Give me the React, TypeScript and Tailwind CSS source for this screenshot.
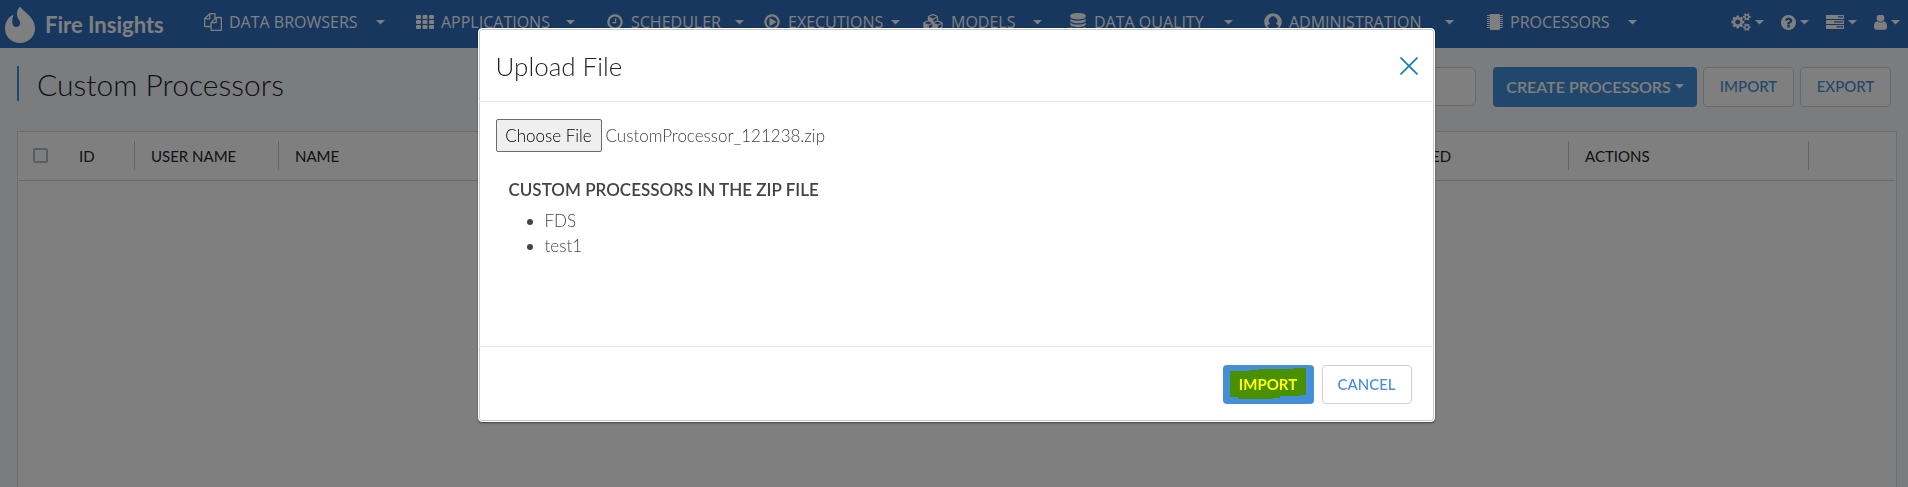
import { useEffect, useRef } from "react";
import type { ReactNode } from "react";

const PATHS = {
  files:
    "M1696 384q40 0 68 28t28 68v1216q0 40-28 68t-68 28h-960q-40 0-68-28t-28-68v-288h-544q-40 0-68-28t-28-68v-672q0-40 20-88t48-76l408-408q28-28 76-48t88-20h416q40 0 68 28t28 68v328q68-40 128-40h416zm-544 213l-299 299h299v-299zm-640-384l-299 299h299v-299zm196 647l316-316v-416h-384v416q0 40-28 68t-68 28h-416v640h512v-256q0-40 20-88t48-76zm956 804v-1152h-384v416q0 40-28 68t-68 28h-416v640h896z",
  clock:
    "M1024 544v448q0 14-9 23t-23 9h-320q-14 0-23-9t-9-23v-64q0-14 9-23t23-9h224v-352q0-14 9-23t23-9h64q14 0 23 9t9 23zm416 352q0-148-73-273t-198-198-273-73-273 73-198 198-73 273 73 273 198 198 273 73 273-73 198-198 73-273zm224 0q0 209-103 385.5t-279.5 279.5-385.5 103-385.5-103-279.5-279.5-103-385.5 103-385.5 279.5-279.5 385.5-103 385.5 103 279.5 279.5 103 385.5z",
  play: "M1312 896q0 37-32 55l-544 320q-15 9-32 9-16 0-32-8-32-19-32-56v-640q0-37 32-56 33-18 64 1l544 320q32 18 32 55zm128 0q0-148-73-273t-198-198-273-73-273 73-198 198-73 273 73 273 198 198 273 73 273-73 198-198 73-273zm224 0q0 209-103 385.5t-279.5 279.5-385.5 103-385.5-103-279.5-279.5-103-385.5 103-385.5 279.5-279.5 385.5-103 385.5 103 279.5 279.5 103 385.5z",
  cubes:
    "M640 1632l384-192v-314l-384 164v342zm-64-454l404-173-404-173-404 173zm1088 454l384-192v-314l-384 164v342zm-64-454l404-173-404-173-404 173zm-448-293l384-165v-266l-384 164v267zm-64-379l441-189-441-189-441 189zm1088 518v416q0 36-19 67t-52 47l-448 224q-25 14-57 14t-57-14l-448-224q-4-2-7-4-2 2-7 4l-448 224q-25 14-57 14t-57-14l-448-224q-33-16-52-47t-19-67v-416q0-38 21.5-70t56.5-48l434-186v-400q0-38 21.5-70t56.5-48l448-192q23-10 50-10t50 10l448 192q35 16 56.5 48t21.5 70v400l434 186q36 16 57 48t21 70z",
  database:
    "M896 768q237 0 443-43t325-127v170q0 69-103 128t-280 93.5-385 34.5-385-34.5-280-93.5-103-128v-170q119 84 325 127t443 43zm0 768q237 0 443-43t325-127v170q0 69-103 128t-280 93.5-385 34.5-385-34.5-280-93.5-103-128v-170q119 84 325 127t443 43zm0-384q237 0 443-43t325-127v170q0 69-103 128t-280 93.5-385 34.5-385-34.5-280-93.5-103-128v-170q119 84 325 127t443 43zm0-1152q208 0 385 34.5t280 93.5 103 128v128q0 69-103 128t-280 93.5-385 34.5-385-34.5-280-93.5-103-128v-128q0-69 103-128t280-93.5 385-34.5z",
  user: "M1536 1399q0 109-62.5 187t-150.5 78h-854q-88 0-150.5-78t-62.5-187q0-85 8.5-160.5t31.5-152 58.5-131 94-89 134.5-34.5q131 128 313 128t313-128q76 0 134.5 34.5t94 89 58.5 131 31.5 152 8.5 160.5zm-256-887q0 159-112.5 271.5t-271.5 112.5-271.5-112.5-112.5-271.5 112.5-271.5 271.5-112.5 271.5 112.5 112.5 271.5z",
  question:
    "M1024 1376v-192q0-14-9-23t-23-9h-192q-14 0-23 9t-9 23v192q0 14 9 23t23 9h192q14 0 23-9t9-23zm256-672q0-88-55.5-163t-138.5-116-170-41q-243 0-371 213-15 24 8 42l132 100q7 6 19 6 16 0 25-12 53-68 86-92 34-24 86-24 48 0 85.5 26t37.5 59q0 38-20 61t-68 45q-63 28-115.5 86.5t-52.5 125.5v36q0 14 9 23t23 9h192q14 0 23-9t9-23q0-19 21.5-49.5t54.5-49.5q32-18 49-28.5t46-35 44.5-48 28-60.5 12.5-81zm384 192q0 209-103 385.5t-279.5 279.5-385.5 103-385.5-103-279.5-279.5-103-385.5 103-385.5 279.5-279.5 385.5-103 385.5 103 279.5 279.5 103 385.5z",
  cogs: "M896 896q0-106-75-181t-181-75-181 75-75 181 75 181 181 75 181-75 75-181zm768 512q0-52-38-90t-90-38-90 38-38 90q0 53 37.5 90.5t90.5 37.5 90.5-37.5 37.5-90.5zm0-1024q0-52-38-90t-90-38-90 38-38 90q0 53 37.5 90.5t90.5 37.5 90.5-37.5 37.5-90.5zm-384 421v185q0 10-7 19.5t-16 10.5l-155 24q-11 35-32 76 34 48 90 115 7 11 7 20 0 12-7 19-23 30-82.5 89.5t-78.5 59.5q-11 0-21-7l-115-90q-37 19-77 31-11 108-23 155-7 24-30 24h-186q-11 0-20-7.5t-10-17.5l-23-153q-34-10-75-31l-118 89q-7 7-20 7-11 0-21-8-144-133-144-160 0-9 7-19 10-14 41-53t47-61q-23-44-35-82l-152-24q-10-1-17-9.5t-7-19.5v-185q0-10 7-19.5t16-10.5l155-24q11-35 32-76-34-48-90-115-7-11-7-20 0-12 7-20 22-30 82-89t79-59q11 0 21 7l115 90q34-18 77-32 11-108 23-154 7-24 30-24h186q11 0 20 7.5t10 17.5l23 153q34 10 75 31l118-89q8-7 20-7 11 0 21 8 144 133 144 160 0 8-7 19-12 16-42 54t-45 60q23 48 34 82l152 23q10 2 17 10.5t7 19.5zm640 533v140q0 16-149 31-12 27-30 52 51 113 51 138 0 4-4 7-122 71-124 71-8 0-46-47t-52-68q-20 2-30 2t-30-2q-14 21-52 68t-46 47q-2 0-124-71-4-3-4-7 0-25 51-138-18-25-30-52-149-15-149-31v-140q0-16 149-31 13-29 30-52-51-113-51-138 0-4 4-7 4-2 35-20t59-34 30-16q8 0 46 46.5t52 67.5q20-2 30-2t30 2q51-71 92-112l6-2q4 0 124 70 4 3 4 7 0 25-51 138 17 23 30 52 149 15 149 31zm0-1024v140q0 16-149 31-12 27-30 52 51 113 51 138 0 4-4 7-122 71-124 71-8 0-46-47t-52-68q-20 2-30 2t-30-2q-14 21-52 68t-46 47q-2 0-124-71-4-3-4-7 0-25 51-138-18-25-30-52-149-15-149-31v-140q0-16 149-31 13-29 30-52-51-113-51-138 0-4 4-7 4-2 35-20t59-34 30-16q8 0 46 46.5t52 67.5q20-2 30-2t30 2q51-71 92-112l6-2q4 0 124 70 4 3 4 7 0 25-51 138 17 23 30 52 149 15 149 31z",
};

function Glyph({ d, box = "0 0 1792 1792", className }: { d: string; box?: string; className: string }) {
  return (
    <svg viewBox={box} className={`shrink-0 ${className}`} fill="currentColor" aria-hidden="true">
      <path d={d} />
    </svg>
  );
}

function Caret() {
  return (
    <svg viewBox="0 0 9 5" className="h-[5px] w-[9px] shrink-0" fill="currentColor" aria-hidden="true">
      <path d="M0 0h9L4.500 4.500z" />
    </svg>
  );
}

function GridIcon() {
  return (
    <svg viewBox="0 0 18 14" className="h-3.5 w-[18px] shrink-0" fill="currentColor" aria-hidden="true">
      {[0, 5, 10].map((y) =>
        [0, 6.5, 13].map((x) => <rect key={`${x}-${y}`} x={x} y={y} width="5" height="4" rx="1" />),
      )}
    </svg>
  );
}

function AccountIcon() {
  return (
    <svg viewBox="0 0 18 18" className="size-[18px] shrink-0" aria-hidden="true">
      <circle cx="9" cy="9" r="8" fill="none" stroke="currentColor" strokeWidth="1.6" />
      <path
        d="M9 1a8 8 0 0 0-6 13.300c.5-2 1.500-3.300 3-3.600A4.200 4.200 0 1 1 12 10.700c1.500.3 2.500 1.600 3 3.600A8 8 0 0 0 9 1z"
        fill="currentColor"
      />
    </svg>
  );
}

function ChipIcon() {
  return (
    <svg viewBox="0 0 16 16" className="size-4 shrink-0" fill="currentColor" aria-hidden="true">
      <rect x="3" y="0" width="10" height="16" rx="1" />
      {[1, 3, 5, 7, 9, 11, 13].map((y) => (
        <path key={y} d={`M0 ${y}h3v1h-3zM13 ${y}h3v1h-3z`} />
      ))}
    </svg>
  );
}

function TasksIcon() {
  return (
    <svg viewBox="0 0 18 14" className="h-3.5 w-[18px] shrink-0" fill="currentColor" aria-hidden="true">
      <path
        fillRule="evenodd"
        d="M.5 0h17q.5 0 .5.500v3q0 .5-.5.500H.5Q0 4 0 3.500v-3Q0 0 .5 0zM12 1.300v1.200h5V1.300zM.5 5h17q.5 0 .5.500v3q0 .5-.5.500H.5Q0 9 0 8.500v-3Q0 5 .5 5zM8 6.300v1.200h9V6.300zM.5 10h17q.5 0 .5.500v3q0 .5-.5.500H.5q-.5 0-.5-.5v-3q0-.5.5-.5zM10.500 11.300v1.200H17v-1.200z"
      />
    </svg>
  );
}

function Flame() {
  return (
    <svg viewBox="0 0 30 36" className="h-9 w-[30px] shrink-0" fill="currentColor" aria-hidden="true">
      <path d="M15 36C6.500 36 0 29.500 0 21.500 0 17 1.800 11.500 7.200 8.200c.8-.4 1.300 0 1 .8-.9 2.500-1.200 5-.7 7.500.5 2.300 1.700 3.600 3.600 3.600 2.600 0 4.300-1.800 4.100-4.200-.2-2.200-2.200-3.700-2.900-6.400C11.400 6.200 12.400 2.500 14.500.3c.4-.4.8-.4 1.100 0 1.900 2.700 4.400 4.200 6.900 6.600C27 11 30 15.500 30 21.500 30 29.500 23.500 36 15 36z" />
    </svg>
  );
}

const menu: { label: string; width: string; gap: string; icon: ReactNode }[] = [
  { label: "DATA BROWSERS", width: "w-[212px]", gap: "gap-[18px]", icon: <Glyph d={PATHS.files} className="size-[18px]" /> },
  { label: "APPLICATIONS", width: "w-[190px]", gap: "gap-4", icon: <GridIcon /> },
  { label: "SCHEDULER", width: "w-[157px]", gap: "gap-[14px]", icon: <Glyph d={PATHS.clock} className="size-[18px]" /> },
  { label: "EXECUTIONS", width: "w-[160px]", gap: "gap-2", icon: <Glyph d={PATHS.play} className="size-[18px]" /> },
  {
    label: "MODELS",
    width: "w-[146px]",
    gap: "gap-[18px]",
    icon: <Glyph d={PATHS.cubes} box="0 0 2304 1792" className="h-4 w-[21px]" />,
  },
  { label: "DATA QUALITY", width: "w-[195px]", gap: "gap-5", icon: <Glyph d={PATHS.database} className="size-[18px]" /> },
  { label: "ADMINISTRATION", width: "w-[223px]", gap: "gap-6", icon: <AccountIcon /> },
  { label: "PROCESSORS", width: "w-[160px]", gap: "gap-[18px]", icon: <ChipIcon /> },
];

const tools: { label: string; icon: ReactNode }[] = [
  { label: "Settings", icon: <Glyph d={PATHS.cogs} box="0 0 1920 1792" className="h-[18px] w-5" /> },
  { label: "Help", icon: <Glyph d={PATHS.question} box="128 128 1536 1536" className="size-[15px]" /> },
  { label: "Tasks", icon: <TasksIcon /> },
  { label: "Account", icon: <Glyph d={PATHS.user} box="256 240 1280 1424" className="h-[15px] w-[13px]" /> },
];

function NavBar() {
  return (
    <header className="flex h-12 items-center bg-[#2e6ebe] pl-[5px] pr-2 text-white">
      <a href="#home" className="flex w-[199px] shrink-0 items-center gap-2.5 pt-0.5">
        <Flame />
        <span className="text-[22px] font-bold leading-6">Fire Insights</span>
      </a>
      <nav className="flex pb-1 font-['Open_Sans',sans-serif]">
        {menu.map((m) => (
          <div key={m.label} className={`shrink-0 ${m.width}`}>
            <button type="button" className={`flex items-center whitespace-nowrap text-base font-medium leading-6 ${m.gap}`}>
              <span className="flex items-center gap-[7px]">
                {m.icon}
                {m.label}
              </span>
              <Caret />
            </button>
          </div>
        ))}
      </nav>
      <div className="ml-auto flex gap-[17px] pb-1">
        {tools.map((t) => (
          <button key={t.label} type="button" aria-label={t.label} className="flex items-center gap-1">
            {t.icon}
            <Caret />
          </button>
        ))}
      </div>
    </header>
  );
}

function HeadCell({ children, className }: { children?: ReactNode; className: string }) {
  return (
    <th scope="col" className={`h-12 p-0 text-left font-normal ${className}`}>
      <div className="flex h-[29px] items-center border-r border-[#c4c8cc] pl-4">{children}</div>
    </th>
  );
}

function Page() {
  return (
    <main className="flex flex-1 flex-col pl-[17px] pr-[11px] pt-[18px]">
      <div className="flex h-[41px] items-center pr-1.5">
        <h1 className="flex h-[35px] items-center self-start border-l-2 border-[#458fd8] pl-[18px] pt-0.5 text-[30px] font-light text-[#212529]">
          Custom Processors
        </h1>
        <input
          type="text"
          aria-label="Search processors"
          className="ml-auto h-[39px] w-[240px] rounded-md border border-[#cdd2d8] bg-white px-3"
        />
        <button
          type="button"
          className="ml-[17px] flex h-10 w-[204px] items-center justify-center gap-1 whitespace-nowrap rounded bg-[#458fd8] text-base font-semibold text-white"
        >
          CREATE PROCESSORS
          <Caret />
        </button>
        <button type="button" className="ml-1.5 h-10 w-[91px] rounded border border-[#cdd2d8] bg-white text-[15px] font-medium text-[#458fd8]">
          IMPORT
        </button>
        <button type="button" className="ml-1.5 h-10 w-[91px] rounded border border-[#cdd2d8] bg-white text-[15px] font-medium text-[#458fd8]">
          EXPORT
        </button>
      </div>
      <div className="mt-6 flex-1 border border-b-0 border-[#d5d8dc] bg-white px-px">
        <table className="w-full table-fixed border-collapse text-[15px] text-[#212529]">
          <thead>
            <tr className="border-b border-[#cfd3d6]">
              <HeadCell className="w-[116px]">
                <input
                  type="checkbox"
                  aria-label="Select all"
                  className="-ml-0.5 mr-[31px] size-[15px] appearance-none rounded-xs border-2 border-[#b4bac0] bg-white"
                />
                ID
              </HeadCell>
              <HeadCell className="w-[144px]">USER NAME</HeadCell>
              <HeadCell className="">NAME</HeadCell>
              <HeadCell className="w-[203px]">UPDATED</HeadCell>
              <HeadCell className="w-[240px]">ACTIONS</HeadCell>
              <th className="w-[86px]" aria-label="More" />
            </tr>
          </thead>
        </table>
      </div>
    </main>
  );
}

function UploadDialog() {
  const fileRef = useRef<HTMLInputElement>(null);

  useEffect(() => {
    if (!fileRef.current) return;
    const transfer = new DataTransfer();
    transfer.items.add(new File([""], "CustomProcessor_121238.zip"));
    fileRef.current.files = transfer.files;
  }, []);

  return (
    <div
      role="dialog"
      aria-modal="true"
      aria-labelledby="upload-title"
      className="w-[957px] max-w-full rounded border border-white bg-white shadow-[0_1px_2px_rgba(0,0,0,0.5),inset_0_0_0_1px_#c9c9c9]"
    >
      <div className="flex h-[73px] items-center justify-between border-b border-[#e5e7ea] pl-[17px] pr-4 pt-0.5">
        <h2 id="upload-title" className="text-[26px] font-light text-[#212529]">
          Upload File
        </h2>
        <button type="button" aria-label="Close" className="text-[#0d7fb0]">
          <svg viewBox="0 0 18 18" className="size-[18px]" fill="none" stroke="currentColor" strokeWidth="1.6" aria-hidden="true">
            <path d="M.5.500l17 17M17.500.500l-17 17" />
          </svg>
        </button>
      </div>
      <div className="h-[244px] px-[17px] pt-[17px] text-[#444]">
        <input
          ref={fileRef}
          type="file"
          aria-label="Zip file"
          className="block w-full text-[17px] font-light leading-[25px] file:mr-1 file:h-[33px] file:w-[106px] file:rounded-xs file:border file:border-solid file:border-[#6b6b6b] file:bg-[#efefef] file:px-0 file:text-center file:text-black"
        />
        <h3 className="mt-6 pl-[13px] text-[17px] font-semibold leading-7">CUSTOM PROCESSORS IN THE ZIP FILE</h3>
        <ul className="mt-1 list-disc pl-[49px] text-[17px] font-light leading-[25px]">
          <li>FDS</li>
          <li>test1</li>
        </ul>
      </div>
      <div className="flex h-[75px] items-center justify-end gap-2 border-t border-[#e5e7ea] pr-[22px]">
        <button type="button" className="relative h-[39px] w-[91px] rounded bg-[#458fd8] text-[15px] font-bold text-[#ffff00]">
          <svg viewBox="0 0 76 32" className="absolute left-[7px] top-[3px] h-8 w-[76px]" fill="#489000" aria-hidden="true">
            <path d="M0 3h19V2h10V1h34V0h13v27h-6v1h-20v2h-7v1H8v-2H0z" />
          </svg>
          <span className="relative">IMPORT</span>
        </button>
        <button type="button" className="h-[39px] w-[90px] rounded border border-[#cdd2d8] bg-white text-[15px] font-medium text-[#458fd8]">
          CANCEL
        </button>
      </div>
    </div>
  );
}

export default function App() {
  return (
    <div className="flex min-h-screen flex-col bg-[#f7f9fd] font-[Lato,sans-serif]">
      <NavBar />
      <Page />
      <div className="fixed inset-0 flex items-start justify-center bg-black/50 pl-1 pt-7">
        <UploadDialog />
      </div>
    </div>
  );
}
